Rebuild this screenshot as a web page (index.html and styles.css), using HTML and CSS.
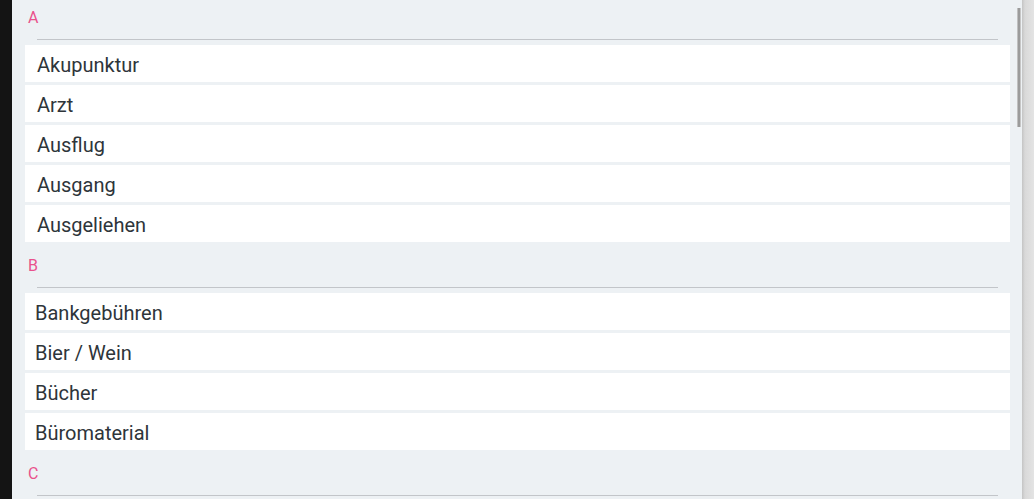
FILE: index.html
```html
<!DOCTYPE html>
<html lang="de">
<head>
<meta charset="utf-8">
<title>Kategorien</title>
<link rel="stylesheet" href="styles.css">
</head>
<body>
<div class="frame">
  <div class="edge-left"></div>
  <main class="panel">
    <div class="scrollbar"></div>
    <section class="group group-first">
      <div class="group-head">
        <span class="letter">A</span>
        <div class="rule"></div>
      </div>
      <ul class="rows rows-a">
        <li class="row">Akupunktur</li>
        <li class="row">Arzt</li>
        <li class="row">Ausflug</li>
        <li class="row">Ausgang</li>
        <li class="row">Ausgeliehen</li>
      </ul>
    </section>
    <section class="group">
      <div class="group-head">
        <span class="letter">B</span>
        <div class="rule"></div>
      </div>
      <ul class="rows">
        <li class="row">Bankgebühren</li>
        <li class="row">Bier / Wein</li>
        <li class="row">Bücher</li>
        <li class="row">Büromaterial</li>
      </ul>
    </section>
    <section class="group">
      <div class="group-head">
        <span class="letter">C</span>
        <div class="rule"></div>
      </div>
    </section>
  </main>
  <div class="edge-right"></div>
</div>
</body>
</html>
```
FILE: styles.css
```css
* { box-sizing: border-box; }
html, body {
  margin: 0;
  padding: 0;
  height: 100%;
  overflow: hidden;
  font-family: Roboto, "Liberation Sans", sans-serif;
}
.frame {
  display: flex;
  height: 499px;
  background: #141414;
}
.edge-left {
  width: 12px;
  flex: none;
  background: #141414;
}
.panel {
  position: relative;
  flex: 1;
  background: #edf1f4;
  overflow: hidden;
}
.edge-right {
  width: 12px;
  flex: none;
  background: linear-gradient(to right, #c4c4c4 0, #d9d9d9 3px, #e4e4e4 100%);
}
.scrollbar {
  position: absolute;
  left: 1005px;
  top: 8px;
  width: 4px;
  height: 119px;
  background: #9b9b9b;
  border-left: 1px solid #c0c0c0;
  border-right: 1px solid #c6c6c6;
}
.group-first { margin-top: -6px; }
.group-head {
  padding: 14px 0 0 16px;
  height: 51px;
}
.letter {
  display: block;
  font-size: 16px;
  line-height: 20px;
  color: #e9528c;
}
.rule {
  margin: 11px 24px 0 9px;
  height: 1px;
  background: #c2c5c9;
}
.rows {
  list-style: none;
  margin: 0 12px 0 13px;
  padding: 0;
  display: flex;
  flex-direction: column;
  gap: 3px;
}
.row {
  height: 37px;
  background: #ffffff;
  padding: 4px 0 0 10px;
  font-size: 20px;
  line-height: 33px;
  color: #2e353a;
}
.rows-a .row { padding-left: 12px; }
```
